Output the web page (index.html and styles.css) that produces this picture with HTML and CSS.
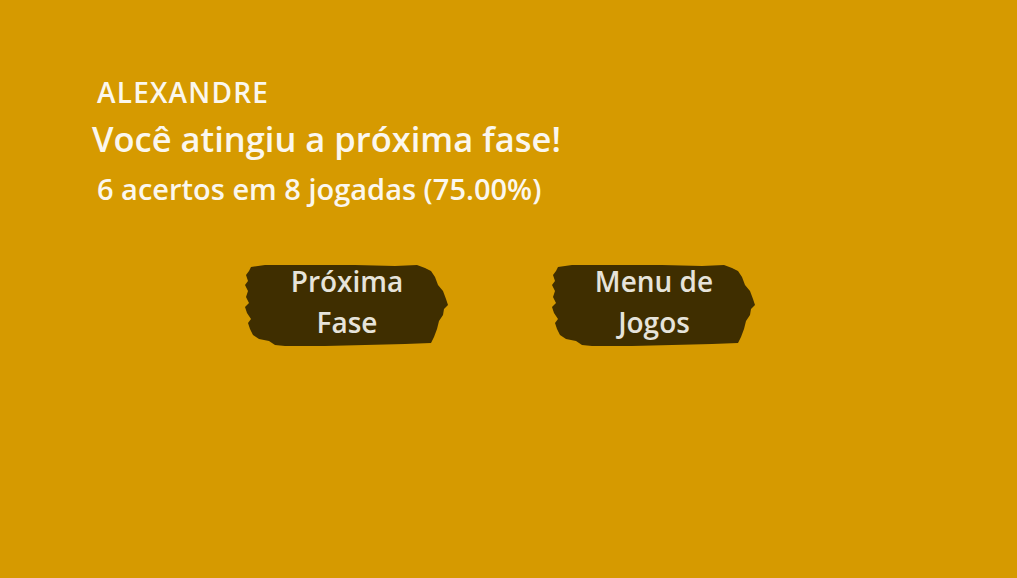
FILE: index.html
```html
<!DOCTYPE html>
<html lang="pt">
<head>
<meta charset="utf-8">
<link rel="stylesheet" href="styles.css">
</head>
<body>
<main class="screen">
  <section class="result">
    <div class="player">ALEXANDRE</div>
    <h1 class="title">Você atingiu a próxima fase!</h1>
    <p class="score">6 acertos em 8 jogadas (75.00%)</p>
  </section>
  <nav class="actions">
    <button class="brush">
      <svg class="brush-bg" viewBox="0 0 204 84" preserveAspectRatio="none" aria-hidden="true">
        <path d="M6 4 L20 2 L60 2 L110 2 L150 3 L172 2 L180 5 L186 8 L190 14 L193 22 L198 28 L201 36 L203 42 L199 46 L198 52 L194 58 L192 66 L189 74 L186 80 L160 81 L120 82 L80 83 L40 83 L30 82 L24 78 L14 76 L8 72 L5 66 L3 60 L6 56 L2 50 L0 44 L4 40 L1 34 L3 28 L0 22 L3 18 L1 12 L4 8 Z"/>
      </svg>
      <span class="label">Próxima<br>Fase</span>
    </button>
    <button class="brush">
      <svg class="brush-bg" viewBox="0 0 204 84" preserveAspectRatio="none" aria-hidden="true">
        <path d="M6 4 L20 2 L60 2 L110 2 L150 3 L172 2 L180 5 L186 8 L190 14 L193 22 L198 28 L201 36 L203 42 L199 46 L198 52 L194 58 L192 66 L189 74 L186 80 L160 81 L120 82 L80 83 L40 83 L30 82 L24 78 L14 76 L8 72 L5 66 L3 60 L6 56 L2 50 L0 44 L4 40 L1 34 L3 28 L0 22 L3 18 L1 12 L4 8 Z"/>
      </svg>
      <span class="label">Menu de<br>Jogos</span>
    </button>
  </nav>
</main>
</body>
</html>
```
FILE: styles.css
```css
html, body {
  margin: 0;
  padding: 0;
  height: 100%;
}
body {
  background: #d69a00;
  font-family: "Open Sans", "Noto Sans", sans-serif;
  color: #fbf7ee;
}
.screen {
  padding: 74px 0 0 0;
}
.result {
  padding-left: 92px;
}
.player {
  font-size: 28px;
  font-weight: 600;
  letter-spacing: 1.2px;
  padding-left: 5px;
  line-height: 36px;
}
.title {
  margin: 8px 0 0 0;
  font-size: 34.5px;
  font-weight: 600;
  line-height: 42px;
}
.score {
  margin: 12px 0 0 0;
  padding-left: 5px;
  font-size: 29px;
  font-weight: 600;
  line-height: 34px;
}
.actions {
  display: flex;
  gap: 103px;
  padding-left: 245px;
  margin-top: 57px;
}
.brush {
  position: relative;
  width: 204px;
  height: 84px;
  border: 0;
  background: none;
  padding: 0;
  font: inherit;
  cursor: pointer;
}
.brush-bg {
  position: absolute;
  inset: 0;
  width: 100%;
  height: 100%;
  fill: #3f2e00;
  filter: blur(0.7px);
}
.label {
  position: relative;
  display: block;
  margin-top: -6px;
  font-size: 28px;
  font-weight: 600;
  line-height: 41px;
  color: #e6e3da;
}
```
